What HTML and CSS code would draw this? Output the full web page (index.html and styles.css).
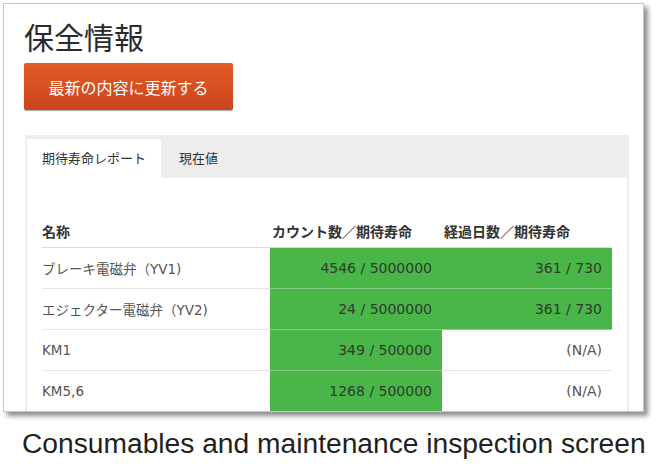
FILE: index.html
```html
<!DOCTYPE html>
<html lang="ja">

<head>
    <meta charset="UTF-8">
    <meta name="viewport" content="width=device-width, initial-scale=1.0">
    <title>保全情報</title>
    <link rel="stylesheet" href="styles.css">
</head>

<body>
    <div class="screen">
        <h1>保全情報</h1>
        <button type="button" class="refresh">最新の内容に更新する</button>

        <div class="panel">
            <div class="tabs">
                <div class="tab active">期待寿命レポート</div>
                <div class="tab">現在値</div>
            </div>
            <div class="content">
                <table>
                    <colgroup>
                        <col class="col-name">
                        <col class="col-count">
                        <col class="col-days">
                    </colgroup>
                    <thead>
                        <tr>
                            <th class="name">名称</th>
                            <th>カウント数／期待寿命</th>
                            <th>経過日数／期待寿命</th>
                        </tr>
                    </thead>
                    <tbody>
                        <tr>
                            <td class="name">ブレーキ電磁弁（YV1)</td>
                            <td class="num ok">4546 / 5000000</td>
                            <td class="num ok">361 / 730</td>
                        </tr>
                        <tr>
                            <td class="name">エジェクター電磁弁（YV2)</td>
                            <td class="num ok">24 / 5000000</td>
                            <td class="num ok">361 / 730</td>
                        </tr>
                        <tr>
                            <td class="name">KM1</td>
                            <td class="num ok">349 / 500000</td>
                            <td class="num">(N/A)</td>
                        </tr>
                        <tr>
                            <td class="name">KM5,6</td>
                            <td class="num ok">1268 / 500000</td>
                            <td class="num">(N/A)</td>
                        </tr>
                    </tbody>
                </table>
            </div>
        </div>
    </div>

    <p class="caption">Consumables and maintenance inspection screen</p>
</body>

</html>
```

FILE: styles.css
```css
body {
    margin: 0;
    padding: 3px 0 0 3px;
    background-color: #ffffff;
    font-family: "Noto Sans CJK JP", "Noto Sans", sans-serif;
}

.screen {
    width: 641px;
    height: 409px;
    border: 1px solid #c8c8c8;
    box-shadow: 4px 4px 5px rgba(0, 0, 0, 0.45);
    padding: 14px 0 0 20px;
    box-sizing: border-box;
    overflow: hidden;
    color: #333333;
}

h1 {
    margin: 0;
    font-size: 30px;
    line-height: 36px;
    font-weight: 400;
    color: #2a2a2a;
}

.refresh {
    display: block;
    margin-top: 9px;
    width: 209px;
    height: 47px;
    border: none;
    border-radius: 2px;
    background: linear-gradient(#e25c27, #cb441b);
    box-shadow: 0 1px 1px rgba(0, 0, 0, 0.35);
    color: #ffffff;
    font-family: inherit;
    font-size: 16px;
}

.panel {
    margin: 25px 0 0 1px;
    width: 604px;
    padding: 4px 2px 0;
    box-sizing: border-box;
    background-color: #eeedeb;
}

.tabs {
    display: flex;
    height: 39px;
}

.tab {
    padding: 0 18px;
    font-size: 13px;
    line-height: 38px;
    color: #333333;
}

.tab.active {
    background-color: #ffffff;
    padding: 0 15px;
}

.content {
    background-color: #ffffff;
    padding: 33px 16px 0 15px;
    height: 260px;
}

table {
    width: 570px;
    table-layout: fixed;
    border-collapse: collapse;
    font-size: 14px;
}

.col-name {
    width: 228px;
}

.col-count {
    width: 172px;
}

th {
    text-align: left;
    font-weight: 700;
    height: 33px;
    padding: 3px 0 0 2px;
    border-bottom: 1px solid #dddddd;
    color: #333333;
}

th.name,
td.name {
    padding-left: 0;
}

td {
    height: 40px;
    padding: 0 10px 0 2px;
    border-bottom: 1px solid #e6e6e6;
    color: #555555;
    font-family: "DejaVu Sans", "Noto Sans CJK JP", sans-serif;
    font-size: 13.5px;
}

td.num {
    text-align: right;
    font-size: 14px;
}

td.ok {
    background-color: #4ab548;
    color: #2f3b2f;
    border-bottom-color: #86cf84;
}

.caption {
    margin: 15px 0 0 19px;
    font-family: "Liberation Sans", Arial, sans-serif;
    font-size: 28.2px;
    line-height: 32px;
    color: #231f20;
}
```
